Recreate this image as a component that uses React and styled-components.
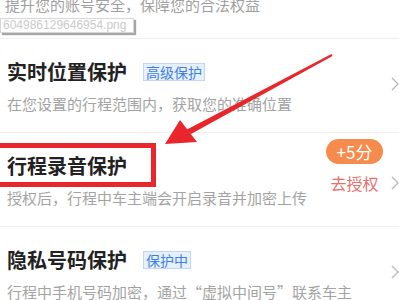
import styled, { createGlobalStyle } from 'styled-components';

const GlobalStyle = createGlobalStyle`
  html, body {
    margin: 0;
    padding: 0;
    background: #fff;
  }
  body {
    font-family: 'Noto Sans CJK SC', 'Noto Sans', sans-serif;
    overflow: hidden;
  }
`;

const items = [
  {
    id: 1,
    title: '实时位置保护',
    badge: '高级保护',
    desc: '在您设置的行程范围内，获取您的准确位置',
  },
  {
    id: 2,
    title: '行程录音保护',
    desc: '授权后，行程中车主端会开启录音并加密上传',
    points: '+5分',
    action: '去授权',
    highlighted: true,
  },
  {
    id: 3,
    title: '隐私号码保护',
    badge: '保护中',
    desc: '行程中手机号码加密，通过“虚拟中间号”联系车主',
  },
];

function Chevron() {
  return (
    <StChevron viewBox="0 0 8 14" width="8" height="14">
      <path d="M1 1 L7 7 L1 13" fill="none" stroke="#b8b8b8" strokeWidth="1.3" />
    </StChevron>
  );
}

function App() {
  return (
    <StPage>
      <GlobalStyle />
      <StIntro>提升您的账号安全，保障您的合法权益</StIntro>
      <StTooltip>604986129646954.png</StTooltip>

      <StList>
        {items.map(item => (
          <StRow key={item.id}>
            <StMain>
              <StTitleLine>
                <StTitle $highlighted={item.highlighted}>{item.title}</StTitle>
                {item.badge && <StBadge>{item.badge}</StBadge>}
              </StTitleLine>
              <StDesc>{item.desc}</StDesc>
            </StMain>
            {item.action ? (
              <StAction>
                <StActionStack>
                  <StPoints>{item.points}</StPoints>
                  <StActionText>{item.action}</StActionText>
                </StActionStack>
                <Chevron />
              </StAction>
            ) : (
              <Chevron />
            )}
          </StRow>
        ))}
      </StList>

      {/* red annotation arrow */}
      <StArrow viewBox="0 0 399 300" width="399" height="300">
        <polygon points="186,130 191,134 332.5,56 331.5,54" fill="#e8262b" />
        <polygon points="165,144 180,120 197,142" fill="#e8262b" />
      </StArrow>
    </StPage>
  );
}

export default App;

const StPage = styled.div`
  position: relative;
  width: 399px;
  height: 300px;
  overflow: hidden;
  background: #fff;
`;

const StIntro = styled.div`
  margin-top: -6px;
  padding-left: 5px;
  height: 44px;
  font-size: 15px;
  line-height: 22px;
  color: #a0a0a0;
  white-space: nowrap;
`;

const StTooltip = styled.div`
  position: absolute;
  left: 0;
  top: 18px;
  width: 128px;
  height: 13px;
  padding: 0 2px;
  border: 1px solid #d6d6d6;
  box-shadow: 2px 2px 1px rgba(0, 0, 0, 0.35);
  background: #fff;
  font-family: 'Liberation Sans', Arial, sans-serif;
  font-size: 12px;
  line-height: 13px;
  color: #cacaca;
`;

const StList = styled.div`
  display: flex;
  flex-direction: column;
`;

const StRow = styled.div`
  display: flex;
  align-items: center;
  justify-content: space-between;
  border-top: 1px solid #efefef;
  height: 93px;
`;

const StMain = styled.div`
  display: flex;
  flex-direction: column;
  gap: 9px;
  padding-left: 7px;
  padding-top: 4px;
`;

const StTitleLine = styled.div`
  display: flex;
  align-items: center;
  gap: 16px;
`;

const StTitle = styled.span`
  position: relative;
  font-size: 20px;
  line-height: 24px;
  font-weight: 700;
  color: #222;

  ${({ $highlighted }) =>
    $highlighted &&
    `
    &::after {
      content: '';
      position: absolute;
      left: -12px;
      top: -11px;
      width: 161px;
      height: 44px;
      box-sizing: border-box;
      border: 5px solid #e8262b;
    }
  `}
`;

const StBadge = styled.span`
  padding: 0 2px;
  font-size: 14px;
  line-height: 16px;
  color: #3f7fdf;
  background: #e6f0fc;
  border: 1px solid #c2d6f3;
`;

const StDesc = styled.div`
  font-size: 15px;
  line-height: 22px;
  color: #a3a3a3;
  white-space: nowrap;
`;

const StAction = styled.div`
  align-self: flex-start;
  margin-top: 6px;
  display: flex;
  align-items: flex-end;
  gap: 8px;
`;

const StActionStack = styled.div`
  display: flex;
  flex-direction: column;
  align-items: center;
  gap: 9px;
`;

const StPoints = styled.div`
  width: 57px;
  height: 25px;
  border-radius: 13px;
  background: #f58b4c;
  color: #fff;
  font-size: 17px;
  line-height: 25px;
  text-align: center;
`;

const StActionText = styled.div`
  font-size: 16px;
  line-height: 20px;
  color: #e6706c;
`;

const StChevron = styled.svg`
  flex-shrink: 0;
  margin-bottom: 3px;
`;

const StArrow = styled.svg`
  position: absolute;
  left: 0;
  top: 0;
  pointer-events: none;
`;
